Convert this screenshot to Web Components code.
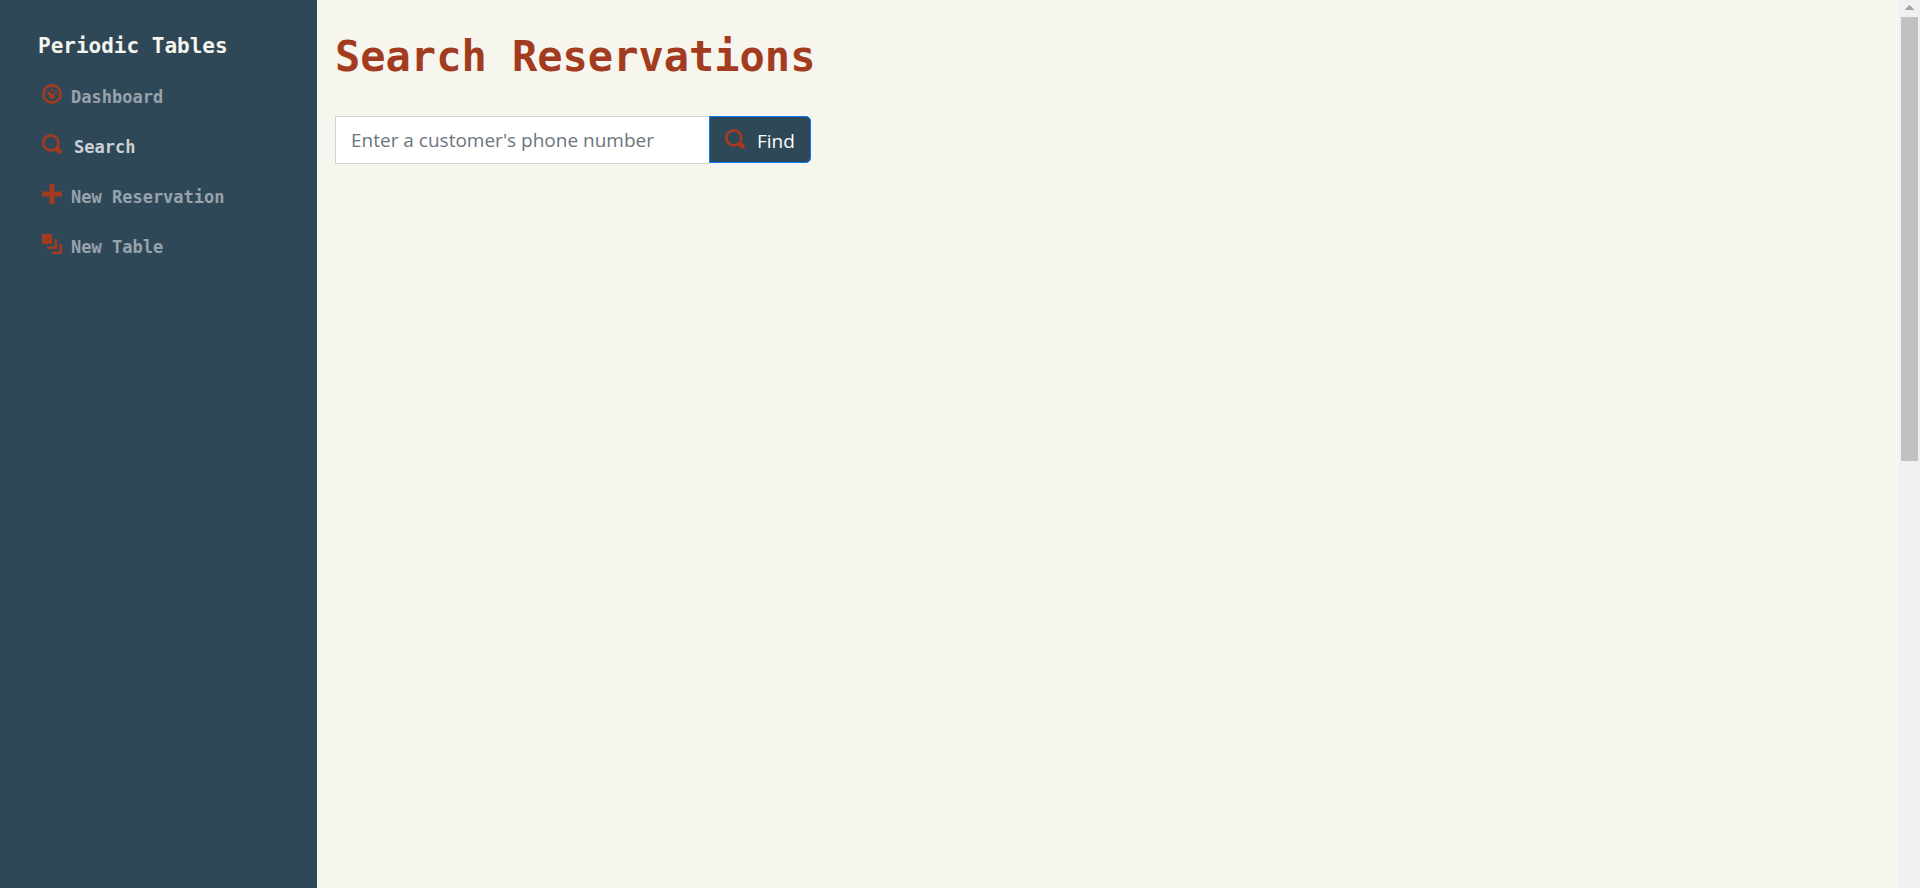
<!DOCTYPE html>
<html lang="en">
<head>
<meta charset="utf-8">
<title>Periodic Tables</title>
<style>
  html, body { margin: 0; height: 100%; }
  body { background: #f6f5ee; font-family: "Open Sans", "Noto Sans", sans-serif; overflow: hidden; }
</style>
</head>
<body>
<pt-app>
  <pt-sidebar slot="side" brand="Periodic Tables">
    <pt-nav-link icon="dashboard" href="#dashboard">Dashboard</pt-nav-link>
    <pt-nav-link icon="search" href="#search" active>Search</pt-nav-link>
    <pt-nav-link icon="plus" href="#new-reservation">New Reservation</pt-nav-link>
    <pt-nav-link icon="layers" href="#new-table">New Table</pt-nav-link>
  </pt-sidebar>
  <pt-search>Search Reservations</pt-search>
  <pt-scrollbar slot="scroll"></pt-scrollbar>
</pt-app>
<script>
const ICONS = {
  dashboard: `<circle cx="4" cy="4" r="3.45" fill="none" stroke="currentColor" stroke-width="1.1"/>
    <circle cx="4" cy="2.4" r=".55"/><circle cx="5.5" cy="3.4" r=".55"/><circle cx="4.05" cy="4.9" r="1.1"/>
    <path d="M2.6 3.5l1.4 1.3" stroke="currentColor" stroke-width="1" stroke-linecap="round"/>`,
  search: `<circle cx="3.55" cy="3.55" r="3" fill="none" stroke="currentColor" stroke-width="1.1"/>
    <path d="M6.1 6.1l.9.9" stroke="currentColor" stroke-width="1.9" stroke-linecap="round"/>`,
  plus: '<path d="M3 0v3h-3v2h3v3h2v-3h3v-2h-3v-3h-2z"/>',
  layers: '<path d="M0 0v4h4v-4h-4zm5 2v3h-3v1h4v-4h-1zm2 2v3h-3v1h4v-4h-1z"/>'
};

class Base extends HTMLElement {
  constructor() {
    super();
    this.attachShadow({ mode: 'open' });
  }
  connectedCallback() { this.shadowRoot.innerHTML = this.render(); }
}

customElements.define('pt-icon', class extends Base {
  render() {
    return `<style>
      :host { display: block; flex: none; width: 20px; height: 20px; color: #a33b20; }
      svg { display: block; width: 100%; height: 100%; fill: currentColor; }
    </style>
    <svg viewBox="0 0 8 8" aria-hidden="true">${ICONS[this.getAttribute('name')]}</svg>`;
  }
});

customElements.define('pt-app', class extends Base {
  render() {
    return `<style>
      :host { display: flex; min-height: 100vh; }
      main { flex: 1; min-width: 0; padding: 29px 18px; }
    </style>
    <slot name="side"></slot><main><slot></slot></main><slot name="scroll"></slot>`;
  }
});

customElements.define('pt-sidebar', class extends Base {
  render() {
    return `<style>
      :host { display: block; flex: none; box-sizing: border-box; width: 317px; padding: 31px 38px;
        background: #2f4858; font: bold 17px/30px "DejaVu Sans Mono", monospace; }
      .brand { display: block; font-size: 21px; color: #f6f5ee; text-decoration: none; white-space: nowrap; }
      nav { display: flex; flex-direction: column; padding: 13px 4px; }
    </style>
    <a class="brand" href="#home">${this.getAttribute('brand')}</a>
    <nav aria-label="Main"><slot></slot></nav>`;
  }
});

customElements.define('pt-nav-link', class extends Base {
  render() {
    return `<style>
      :host { display: block; }
      a { display: flex; gap: 9px; height: 50px; align-items: flex-start; padding-top: 10px; box-sizing: border-box;
        color: rgba(255, 255, 255, .5); text-decoration: none; white-space: nowrap; }
      span { line-height: 26px; }
      :host([active]) a { gap: 12px; color: rgba(255, 255, 255, .75); }
    </style>
    <a href="${this.getAttribute('href')}"><pt-icon name="${this.getAttribute('icon')}"></pt-icon><span><slot></slot></span></a>`;
  }
});

customElements.define('pt-search', class extends Base {
  render() {
    return `<style>
      :host { display: block; }
      h1 { margin: 0 0 31px; font: bold 42px/56px "DejaVu Sans Mono", monospace; color: #a33b20; white-space: nowrap; }
      form { display: flex; align-items: flex-start; max-width: 476px; font-size: 19px; }
      input { flex: 1; min-width: 0; box-sizing: border-box; height: 48px; margin: 0; padding: 0 15px;
        border: 1px solid #ced4da; border-radius: 0; background: #fff; color: #495057; font: inherit; }
      input::placeholder { color: #6c757d; opacity: 1; }
      button { display: flex; gap: 12px; box-sizing: border-box; height: 47px; width: 102px; margin: 0 0 0 -1px;
        padding: 12px 15px; border: 1px solid #007bff; border-radius: 0 5px 5px 0;
        background: #2f4858; color: #fff; font: inherit; line-height: 24px; }
    </style>
    <h1><slot></slot></h1>
    <form>
      <input type="text" aria-label="Phone number" placeholder="Enter a customer's phone number">
      <button type="button"><pt-icon name="search"></pt-icon><span>Find</span></button>
    </form>`;
  }
});

customElements.define('pt-scrollbar', class extends Base {
  render() {
    return `<style>
      :host { display: flex; flex-direction: column; align-items: center; flex: none; width: 21px; height: 100vh; background: #f0f0f0; }
      svg { display: block; flex: none; width: 9px; height: 5px; margin: 5px 0 7px; fill: #a3a3a3; }
      .thumb { width: 17px; height: 50%; background: #c1c1c1; }
    </style>
    <svg viewBox="0 0 9 5" aria-hidden="true"><path d="M4 0h1v1h1v1h1v1h1v1h1v1H0V4h1V3h1V2h1V1h1z"/></svg>
    <div class="thumb"></div>`;
  }
});
</script>
</body>
</html>
